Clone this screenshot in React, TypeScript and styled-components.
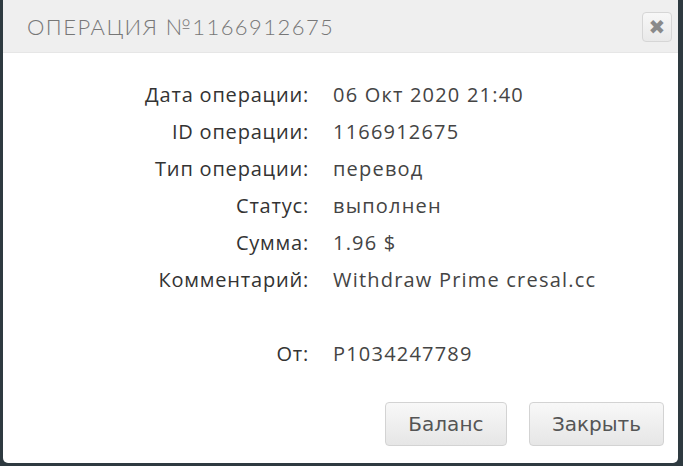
import React from "react";
import styled, { createGlobalStyle } from "styled-components";

const GlobalStyle = createGlobalStyle`
  html, body {
    margin: 0;
    padding: 0;
    background: #2e3a40;
    height: 100%;
  }
  #root {
    height: 100%;
  }
`;

interface Field {
  label: string;
  value: string;
  gapBefore?: boolean;
}

const fields: Field[] = [
  { label: "Дата операции:", value: "06 Окт 2020 21:40" },
  { label: "ID операции:", value: "1166912675" },
  { label: "Тип операции:", value: "перевод" },
  { label: "Статус:", value: "выполнен" },
  { label: "Сумма:", value: "1.96 $" },
  { label: "Комментарий:", value: "Withdraw Prime cresal.cc" },
  { label: "От:", value: "P1034247789", gapBefore: true },
];

const Page = styled.div`
  height: 466px;
  width: 683px;
  padding: 0 5px 3px 3px;
  box-sizing: border-box;
  display: flex;
`;

const Dialog = styled.div`
  flex: 1;
  display: flex;
  flex-direction: column;
  background: #ffffff;
  border-radius: 0 0 5px 5px;
  overflow: hidden;
`;

const Header = styled.div`
  height: 53px;
  background: #efefef;
  display: flex;
  align-items: center;
  justify-content: space-between;
  padding: 0 6px 0 24px;
  border-bottom: 1px solid #e6e6e6;
  box-sizing: border-box;
`;

const Title = styled.h1`
  margin: 0;
  font-family: "Lato", "DejaVu Sans", sans-serif;
  font-weight: 300;
  font-size: 22px;
  letter-spacing: 1.45px;
  color: #777777;
  text-transform: uppercase;
`;

const CloseButton = styled.button`
  width: 30px;
  height: 30px;
  padding: 0;
  border: 1px solid #d6d6d6;
  border-radius: 4px;
  background: linear-gradient(#f7f7f7, #e9e9e9);
  display: flex;
  align-items: center;
  justify-content: center;
  color: #8a8a8a;
  font-family: "DejaVu Sans", sans-serif;
  font-size: 20px;
  margin-top: 1px;
`;

const Body = styled.div`
  flex: 1;
  padding-top: 23px;
`;

const Details = styled.div`
  display: grid;
  grid-template-columns: 306px 1fr;
  column-gap: 24px;
  grid-auto-rows: 37px;
  font-family: "Open Sans", "Lato", sans-serif;
  font-size: 20px;
  letter-spacing: 0.8px;
`;

const Label = styled.div`
  color: #333333;
  display: flex;
  align-items: center;
  justify-content: flex-end;
`;

const Value = styled.div`
  color: #444444;
  display: flex;
  align-items: center;
  letter-spacing: 1.2px;
`;

const Spacer = styled.div`
  grid-column: 1 / -1;
`;

const Footer = styled.div`
  display: flex;
  justify-content: flex-end;
  gap: 22px;
  padding: 0 14px 17px 0;
`;

const Button = styled.button`
  height: 44px;
  min-width: 122px;
  padding: 0 22px;
  border: 1px solid #d3d3d3;
  border-radius: 4px;
  background: linear-gradient(#f8f8f8 0%, #efefef 50%, #e6e6e6 100%);
  font-family: "DejaVu Sans", sans-serif;
  font-size: 20px;
  color: #555555;
`;

export default function App() {
  return (
    <>
      <GlobalStyle />
      <Page>
        <Dialog>
          <Header>
            <Title>Операция №1166912675</Title>
            <CloseButton>✖</CloseButton>
          </Header>
          <Body>
            <Details>
              {fields.map((f) => (
                <React.Fragment key={f.label}>
                  {f.gapBefore && <Spacer />}
                  <Label>{f.label}</Label>
                  <Value>{f.value}</Value>
                </React.Fragment>
              ))}
            </Details>
          </Body>
          <Footer>
            <Button>Баланс</Button>
            <Button>Закрыть</Button>
          </Footer>
        </Dialog>
      </Page>
    </>
  );
}
